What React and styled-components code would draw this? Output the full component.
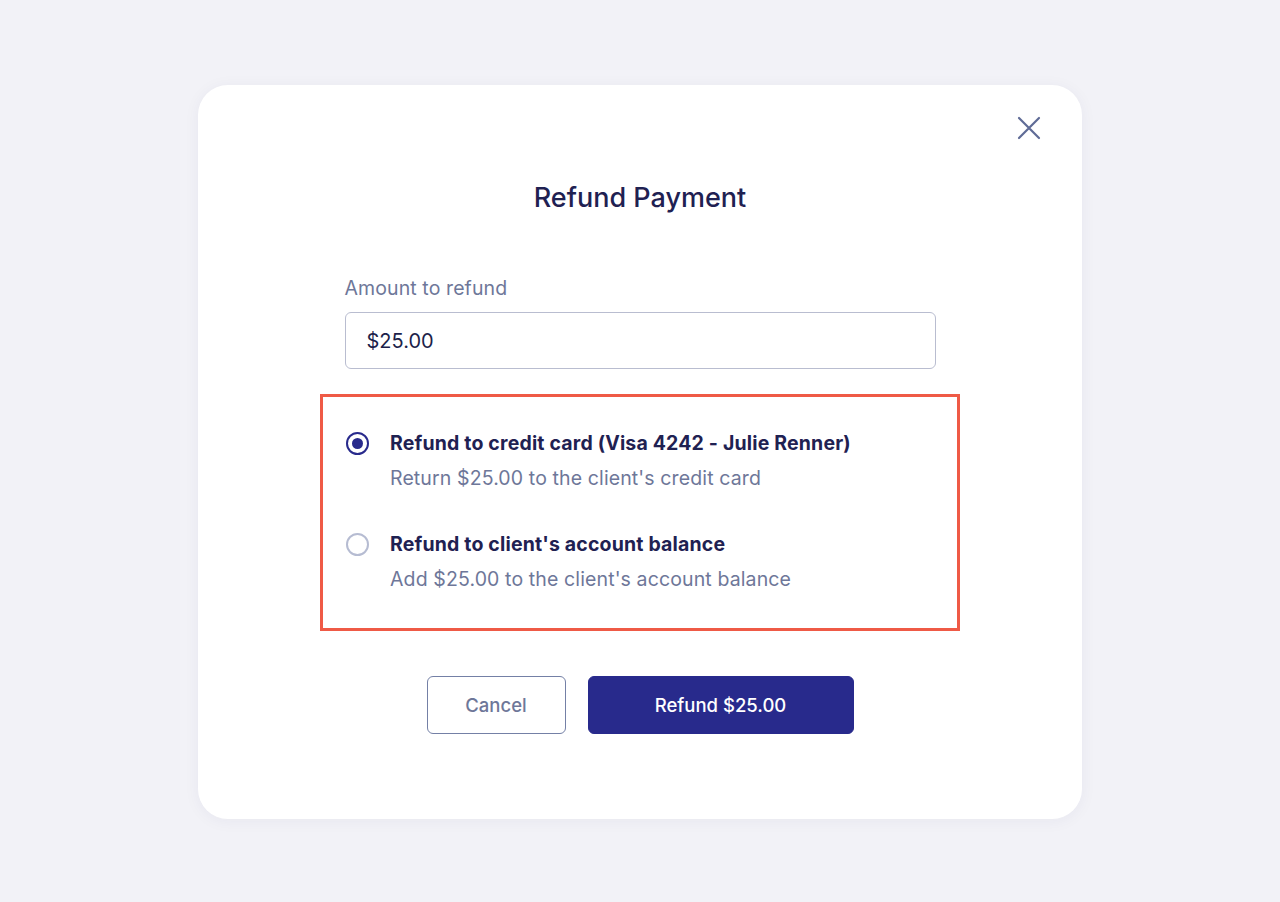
import React, { useState } from 'react';
import styled, { createGlobalStyle } from 'styled-components';

const GlobalStyle = createGlobalStyle`
  html, body {
    margin: 0;
    padding: 0;
    background: #f2f2f7;
    font-family: 'Inter', 'Noto Sans', sans-serif;
  }
`;

const Page = styled.div`
  min-height: 902px;
  display: flex;
  justify-content: center;
  align-items: flex-start;
  padding-top: 85px;
  box-sizing: border-box;
`;

const Modal = styled.div`
  position: relative;
  width: 884px;
  box-sizing: border-box;
  background: #fff;
  border-radius: 30px;
  box-shadow: 0 2px 16px rgba(40, 42, 100, 0.05);
  padding: 97px 0 85px;
  display: flex;
  flex-direction: column;
  align-items: center;
`;

const CloseButton = styled.button`
  position: absolute;
  top: 30px;
  right: 40px;
  width: 26px;
  height: 26px;
  padding: 0;
  border: none;
  background: none;
  cursor: pointer;
  display: flex;
  align-items: center;
  justify-content: center;
`;

const Title = styled.h2`
  margin: 0;
  font-size: 27px;
  line-height: 32px;
  font-weight: 500;
  color: #1f2152;
`;

const Field = styled.div`
  width: 591px;
  margin-top: 62px;
  display: flex;
  flex-direction: column;
  gap: 12px;
`;

const Label = styled.label`
  font-size: 19.5px;
  line-height: 24px;
  letter-spacing: 0.1px;
  color: #6e7799;
`;

const Input = styled.input`
  height: 57px;
  box-sizing: border-box;
  border: 1.5px solid #b9bdd0;
  border-radius: 6px;
  padding: 0 21px;
  font-family: inherit;
  font-size: 20px;
  color: #1d1f4a;
  outline: none;
`;

const Options = styled.div`
  width: 640px;
  box-sizing: border-box;
  margin-top: 25px;
  border: 3px solid #ef5a46;
  padding: 34px 23px 37px;
  display: flex;
  flex-direction: column;
  gap: 42px;
`;

const Option = styled.label`
  display: grid;
  grid-template-columns: 22px 1fr;
  column-gap: 22px;
  row-gap: 11px;
  align-items: center;
  cursor: pointer;
`;

const Radio = styled.span`
  width: 23px;
  height: 23px;
  box-sizing: border-box;
  border-radius: 50%;
  border: 2.5px solid ${p => (p.$checked ? '#282a8c' : '#b6bcd2')};
  display: flex;
  align-items: center;
  justify-content: center;

  &::after {
    content: '';
    width: 11px;
    height: 11px;
    border-radius: 50%;
    background: #282a8c;
    display: ${p => (p.$checked ? 'block' : 'none')};
  }
`;

const OptionTitle = styled.span`
  font-size: 19.5px;
  line-height: 24px;
  font-weight: 700;
  letter-spacing: 0.17px;
  color: #1f2152;
`;

const OptionDesc = styled.span`
  grid-column: 2;
  font-size: 19.5px;
  line-height: 24px;
  letter-spacing: 0.12px;
  color: #6e7799;
`;

const Actions = styled.div`
  margin-top: 45px;
  display: flex;
  gap: 22px;
`;

const Button = styled.button`
  height: 58px;
  box-sizing: border-box;
  border-radius: 6px;
  font-family: inherit;
  font-size: 18.5px;
  font-weight: 500;
  cursor: pointer;
  border: 1.5px solid ${p => (p.$primary ? '#282a8c' : '#7480a6')};
  background: ${p => (p.$primary ? '#282a8c' : '#fff')};
  color: ${p => (p.$primary ? '#fff' : '#6e7799')};
  width: ${p => (p.$primary ? '266px' : '139px')};
`;

const options = [
  {
    id: 'card',
    title: 'Refund to credit card (Visa 4242 - Julie Renner)',
    desc: "Return $25.00 to the client's credit card",
  },
  {
    id: 'balance',
    title: "Refund to client's account balance",
    desc: "Add $25.00 to the client's account balance",
  },
];

export default function App() {
  const [selected, setSelected] = useState('card');
  const [amount, setAmount] = useState('$25.00');

  return (
    <Page>
      <GlobalStyle />
      <Modal>
        <CloseButton aria-label="Close">
          <svg width="24" height="24" viewBox="0 0 24 24" fill="none">
            <path d="M2 2L22 22M22 2L2 22" stroke="#5f6b96" strokeWidth="2.2" strokeLinecap="round" />
          </svg>
        </CloseButton>
        <Title>Refund Payment</Title>
        <Field>
          <Label>Amount to refund</Label>
          <Input value={amount} onChange={e => setAmount(e.target.value)} />
        </Field>
        <Options>
          {options.map(o => (
            <Option key={o.id} onClick={() => setSelected(o.id)}>
              <Radio $checked={selected === o.id} />
              <OptionTitle>{o.title}</OptionTitle>
              <OptionDesc>{o.desc}</OptionDesc>
            </Option>
          ))}
        </Options>
        <Actions>
          <Button>Cancel</Button>
          <Button $primary>Refund $25.00</Button>
        </Actions>
      </Modal>
    </Page>
  );
}
